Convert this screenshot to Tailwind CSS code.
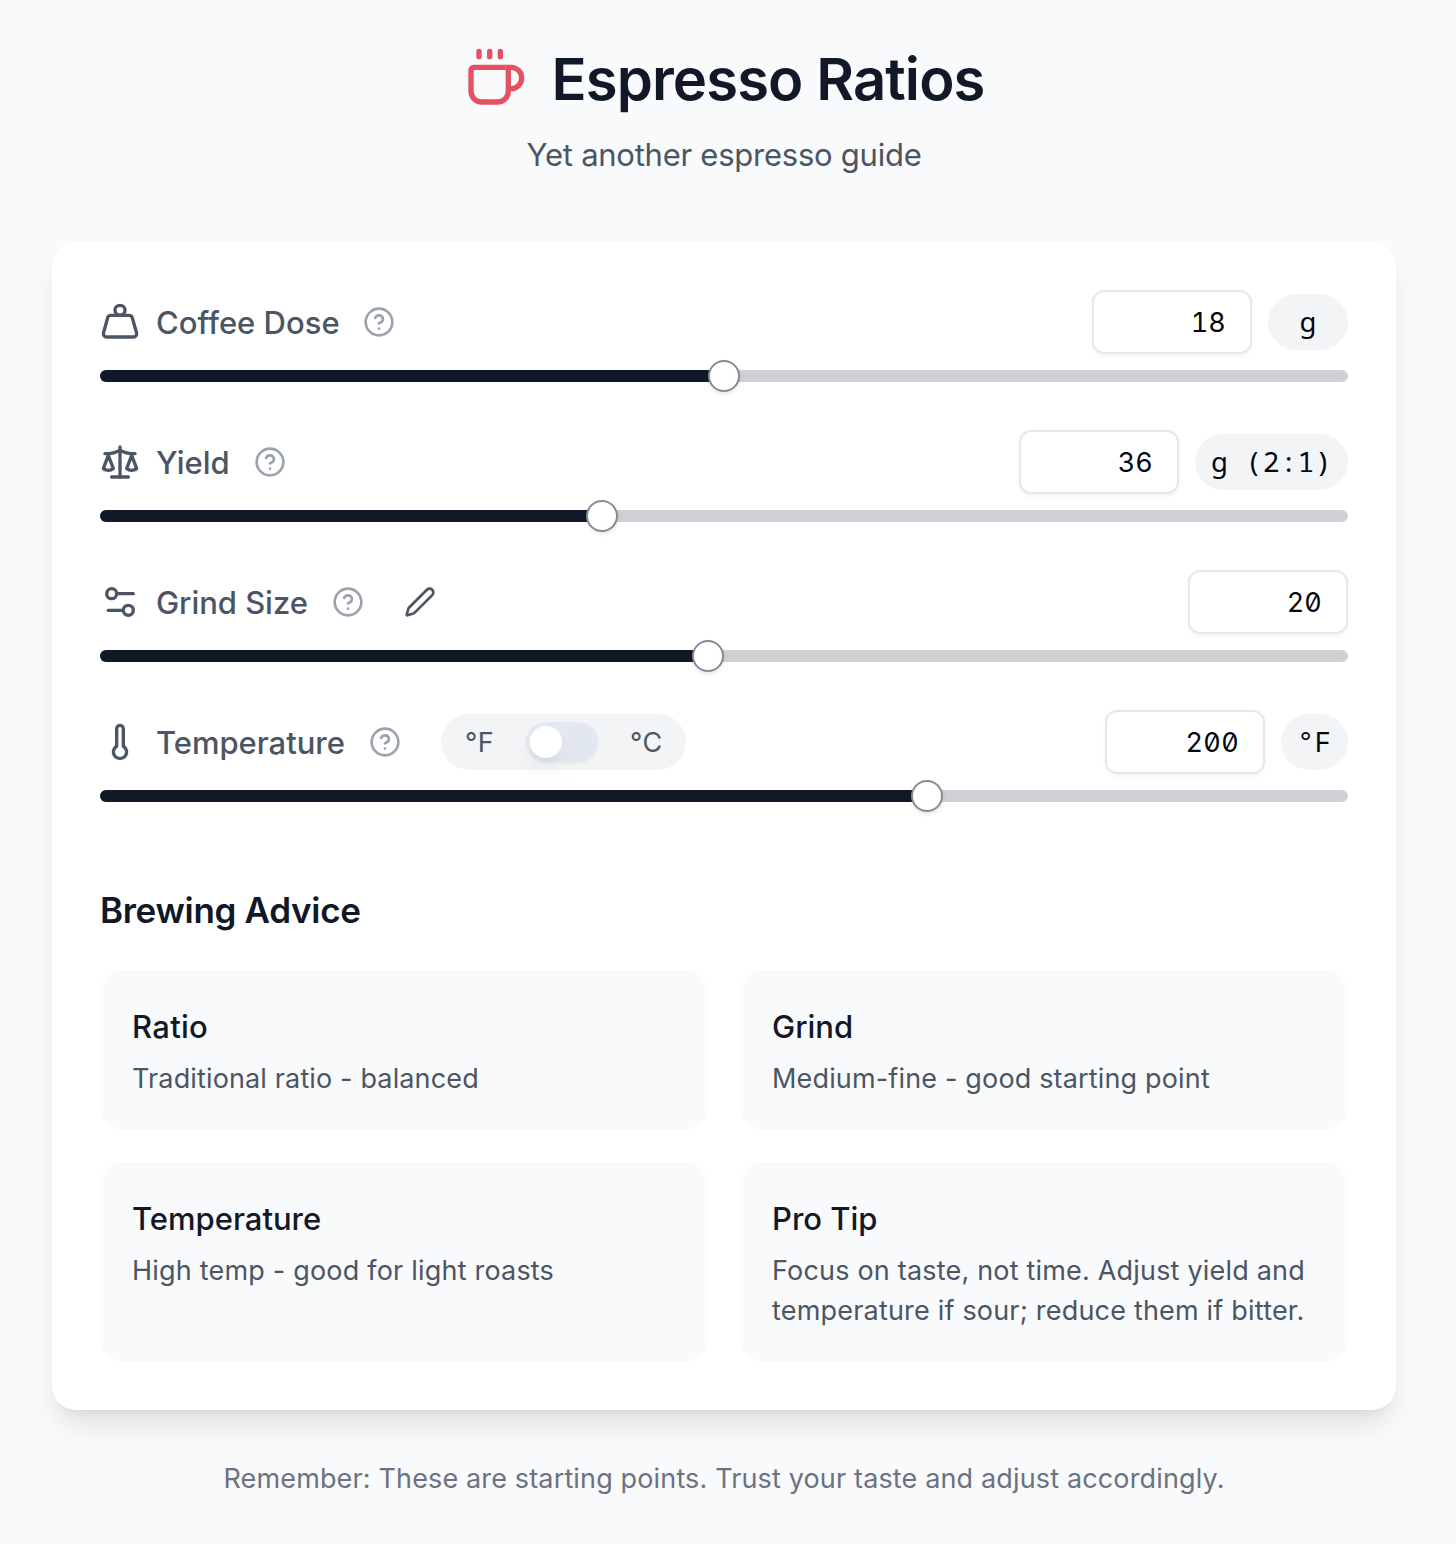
<!DOCTYPE html>
<html lang="en">
<head>
<meta charset="utf-8">
<title>Espresso Ratios</title>
<script src="https://cdn.jsdelivr.net/npm/@tailwindcss/browser@4"></script>
</head>
<body class="min-h-[1544px] bg-[#f9fafc] font-['Inter',sans-serif] text-[#030712]">
<svg class="hidden">
  <symbol id="help" viewBox="0 0 24 24"><circle cx="12" cy="12" r="10"/><path d="M9.09 9a3 3 0 0 1 5.83 1c0 2-3 3-3 3"/><path d="M12 17h.01"/></symbol>
</svg>
<div class="px-[52px] pr-[60px] pt-[46px]">
  <header class="flex flex-col items-center">
    <div class="flex h-16 items-center gap-6">
      <svg class="size-16 text-[#e55063]" viewBox="0 0 24 24" fill="none" stroke="currentColor" stroke-width="2" stroke-linecap="round" stroke-linejoin="round"><path d="M10 2v2"/><path d="M14 2v2"/><path d="M16 8a1 1 0 0 1 1 1v8a4 4 0 0 1-4 4H7a4 4 0 0 1-4-4V9a1 1 0 0 1 1-1h14a4 4 0 1 1 0 8h-1"/><path d="M6 2v2"/></svg>
      <h1 class="pt-0.5 text-[58px] leading-[60px] font-semibold tracking-[-0.9px] whitespace-nowrap text-[#111827]">Espresso Ratios</h1>
    </div>
    <p class="mt-[21px] text-[31px] leading-12 tracking-[-0.25px] text-[#4b5563]">Yet another espresso guide</p>
  </header>

  <main class="mt-[63px] h-[1168px] rounded-3xl bg-white px-12 pt-12 shadow-[0_20px_30px_-6px_rgba(0,0,0,0.1),0_8px_12px_-8px_rgba(0,0,0,0.1)]">
    <section class="flex flex-col gap-12">
      <div>
        <div class="flex h-16 items-center justify-between">
          <div class="flex items-center text-[31px] font-medium text-[#4b5563]">
            <svg class="size-10" viewBox="0 0 24 24" fill="none" stroke="currentColor" stroke-width="2" stroke-linecap="round" stroke-linejoin="round"><circle cx="12" cy="5" r="3"/><path d="M6.5 8a2 2 0 0 0-1.905 1.46L2.1 18.5A2 2 0 0 0 4 21h16a2 2 0 0 0 1.925-2.54L19.4 9.5A2 2 0 0 0 17.48 8Z"/></svg>
            <span class="ml-4 w-[183px] pt-0.5 whitespace-nowrap">Coffee Dose</span>
            <svg class="ml-6 size-8 text-[#9ca3af]" fill="none" stroke="currentColor" stroke-width="2" stroke-linecap="round" stroke-linejoin="round"><use href="#help"/></svg>
          </div>
          <div class="flex items-center gap-4">
            <div class="flex h-16 w-40 items-center justify-end rounded-xl border-2 border-[#e2e8f0] px-6 pt-0.5 text-[27px] tracking-[0.15px] tabular-nums slashed-zero shadow-[0_2px_4px_rgba(0,0,0,0.05)]">18</div>
            <div class="flex h-14 w-20 items-center justify-center rounded-full bg-[#f3f4f6] pb-0.5 font-['Noto_Sans_Mono',monospace] text-[28px]">g</div>
          </div>
        </div>
        <div class="relative mt-4 h-3 rounded-full bg-[#cfd0d4]">
          <div class="h-3 rounded-l-full bg-[#111827]" style="width:624px"></div>
          <div class="absolute -top-2.5 size-8 -translate-x-1/2 rounded-full border-2 border-[#888b94] bg-white shadow-[0_2px_4px_rgba(0,0,0,0.1)]" style="left:624px"></div>
        </div>
      </div>

      <div>
        <div class="flex h-16 items-center justify-between">
          <div class="flex items-center text-[31px] font-medium text-[#4b5563]">
            <svg class="size-10" viewBox="0 0 24 24" fill="none" stroke="currentColor" stroke-width="2" stroke-linecap="round" stroke-linejoin="round"><path d="m16 16 3-8 3 8c-.87.65-1.92 1-3 1s-2.13-.35-3-1Z"/><path d="m2 16 3-8 3 8c-.87.65-1.92 1-3 1s-2.13-.35-3-1Z"/><path d="M7 21h10"/><path d="M12 3v18"/><path d="M3 7h2c2 0 5-1 7-2 2 1 5 2 7 2h2"/></svg>
            <span class="ml-4 w-[74px] pt-0.5 whitespace-nowrap">Yield</span>
            <svg class="ml-6 size-8 text-[#9ca3af]" fill="none" stroke="currentColor" stroke-width="2" stroke-linecap="round" stroke-linejoin="round"><use href="#help"/></svg>
          </div>
          <div class="flex items-center gap-4">
            <div class="flex h-16 w-40 items-center justify-end rounded-xl border-2 border-[#e2e8f0] px-6 pt-0.5 text-[27px] tracking-[0.15px] tabular-nums slashed-zero shadow-[0_2px_4px_rgba(0,0,0,0.05)]">36</div>
            <div class="flex h-14 w-[153px] items-center justify-center rounded-full bg-[#f3f4f6] pb-0.5 font-['Noto_Sans_Mono',monospace] text-[28px] tracking-[0.48px]">g (2:1)</div>
          </div>
        </div>
        <div class="relative mt-4 h-3 rounded-full bg-[#cfd0d4]">
          <div class="h-3 rounded-l-full bg-[#111827]" style="width:502px"></div>
          <div class="absolute -top-2.5 size-8 -translate-x-1/2 rounded-full border-2 border-[#888b94] bg-white shadow-[0_2px_4px_rgba(0,0,0,0.1)]" style="left:502px"></div>
        </div>
      </div>

      <div>
        <div class="flex h-16 items-center justify-between">
          <div class="flex items-center text-[31px] font-medium text-[#4b5563]">
            <svg class="size-10" viewBox="0 0 24 24" fill="none" stroke="currentColor" stroke-width="2" stroke-linecap="round" stroke-linejoin="round"><path d="M20 7h-9"/><path d="M14 17H5"/><circle cx="17" cy="17" r="3"/><circle cx="7" cy="7" r="3"/></svg>
            <span class="ml-4 w-[152px] pt-0.5 tracking-[-0.05px] whitespace-nowrap">Grind Size</span>
            <svg class="ml-6 size-8 text-[#9ca3af]" fill="none" stroke="currentColor" stroke-width="2" stroke-linecap="round" stroke-linejoin="round"><use href="#help"/></svg>
            <svg class="ml-10 size-8" viewBox="0 0 24 24" fill="none" stroke="currentColor" stroke-width="2" stroke-linecap="round" stroke-linejoin="round"><path d="M21.174 6.812a1 1 0 0 0-3.986-3.987L3.842 16.174a2 2 0 0 0-.5.83l-1.321 4.352a.5.5 0 0 0 .623.622l4.353-1.32a2 2 0 0 0 .83-.497z"/></svg>
          </div>
          <div class="flex h-16 w-40 items-center justify-end rounded-xl border-2 border-[#e2e8f0] px-6 pt-0.5 text-[27px] tracking-[0.15px] tabular-nums slashed-zero shadow-[0_2px_4px_rgba(0,0,0,0.05)]">20</div>
        </div>
        <div class="relative mt-4 h-3 rounded-full bg-[#cfd0d4]">
          <div class="h-3 rounded-l-full bg-[#111827]" style="width:608px"></div>
          <div class="absolute -top-2.5 size-8 -translate-x-1/2 rounded-full border-2 border-[#888b94] bg-white shadow-[0_2px_4px_rgba(0,0,0,0.1)]" style="left:608px"></div>
        </div>
      </div>

      <div>
        <div class="flex h-16 items-center justify-between">
          <div class="flex items-center text-[31px] font-medium text-[#4b5563]">
            <svg class="size-10" viewBox="0 0 24 24" fill="none" stroke="currentColor" stroke-width="2" stroke-linecap="round" stroke-linejoin="round"><path d="M14 4v10.54a4 4 0 1 1-4 0V4a2 2 0 0 1 4 0Z"/></svg>
            <span class="ml-4 w-[189px] pt-0.5 tracking-[-0.03px] whitespace-nowrap">Temperature</span>
            <svg class="ml-6 size-8 text-[#9ca3af]" fill="none" stroke="currentColor" stroke-width="2" stroke-linecap="round" stroke-linejoin="round"><use href="#help"/></svg>
            <div class="ml-10 flex h-14 items-center gap-8 rounded-full bg-[#f3f4f6] px-6 text-[27px] font-normal">
              <span class="w-[29px] pt-0.5 tracking-[0.5px] whitespace-nowrap">°F</span>
              <div class="flex h-10 w-[72px] items-center rounded-full bg-[#e2e8f0] px-1 shadow-[0_2px_4px_rgba(0,0,0,0.04)]">
                <div class="size-8 rounded-full bg-white shadow-[0_20px_30px_-6px_rgba(0,0,0,0.1),0_8px_12px_-8px_rgba(0,0,0,0.1)]"></div>
              </div>
              <span class="w-8 pt-0.5 tracking-[0.5px] whitespace-nowrap">°C</span>
            </div>
          </div>
          <div class="flex items-center gap-4">
            <div class="flex h-16 w-40 items-center justify-end rounded-xl border-2 border-[#e2e8f0] px-6 pt-0.5 text-[27px] tracking-[0.3px] tabular-nums slashed-zero shadow-[0_2px_4px_rgba(0,0,0,0.05)]">200</div>
            <div class="flex h-14 w-[67px] items-center justify-center rounded-full bg-[#f3f4f6] pb-0.5 font-['Noto_Sans_Mono',monospace] text-[28px] tracking-[0.48px]">°F</div>
          </div>
        </div>
        <div class="relative mt-4 h-3 rounded-full bg-[#cfd0d4]">
          <div class="h-3 rounded-l-full bg-[#111827]" style="width:827px"></div>
          <div class="absolute -top-2.5 size-8 -translate-x-1/2 rounded-full border-2 border-[#888b94] bg-white shadow-[0_2px_4px_rgba(0,0,0,0.1)]" style="left:827px"></div>
        </div>
      </div>
    </section>

    <section class="mt-20 text-[#111827]">
      <h2 class="text-[35px] leading-14 font-semibold tracking-[-0.3px]">Brewing Advice</h2>
      <div class="mt-8 grid grid-cols-2 gap-8">
        <div class="rounded-3xl bg-[#f9fafb] px-8 pt-[33px] pb-[31px]">
          <h3 class="text-[31px] leading-12 font-medium tracking-[0.3px]">Ratio</h3>
          <p class="mt-2 text-[27px] leading-10 tracking-[0.14px] text-[#4b5563]">Traditional ratio - balanced</p>
        </div>
        <div class="rounded-3xl bg-[#f9fafb] px-8 pt-[33px] pb-[31px]">
          <h3 class="text-[31px] leading-12 font-medium">Grind</h3>
          <p class="mt-2 text-[27px] leading-10 tracking-[0.16px] text-[#4b5563]">Medium-fine - good starting point</p>
        </div>
        <div class="rounded-3xl bg-[#f9fafb] px-8 pt-[33px] pb-[31px]">
          <h3 class="text-[31px] leading-12 font-medium">Temperature</h3>
          <p class="mt-2 text-[27px] leading-10 tracking-[0.2px] text-[#4b5563]">High temp - good for light roasts</p>
        </div>
        <div class="rounded-3xl bg-[#f9fafb] px-8 pt-[33px] pb-[31px]">
          <h3 class="text-[31px] leading-12 font-medium">Pro Tip</h3>
          <p class="mt-2 text-[27px] leading-10 tracking-[0.19px] whitespace-nowrap text-[#4b5563]">Focus on taste, not time. Adjust yield and<br>temperature if sour; reduce them if bitter.</p>
        </div>
      </div>
    </section>
  </main>

  <footer class="mt-[49px] text-center text-[27px] leading-10 tracking-[0.145px] whitespace-nowrap text-[#6b7280]">Remember: These are starting points. Trust your taste and adjust accordingly.</footer>
</div>
</body>
</html>
